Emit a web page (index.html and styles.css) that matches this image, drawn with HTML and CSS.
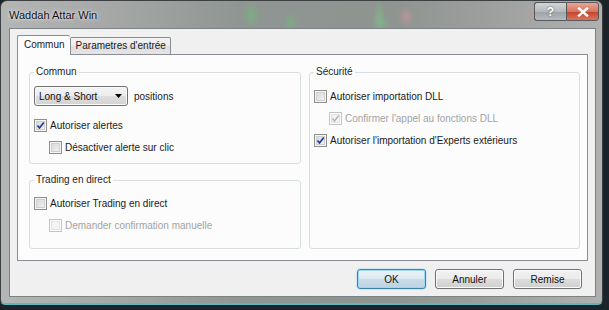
FILE: index.html
```html
<!DOCTYPE html>
<html lang="fr">
<head>
  <meta charset="UTF-8">
  <title>Waddah Attar Win</title>
  <link rel="stylesheet" href="styles.css">
</head>
<body>
  <div class="window">
    <div class="titlebar">
      <span class="title">Waddah Attar Win</span>
      <div class="caption">
        <span class="cap help">?</span>
        <span class="cap close">
          <svg width="12" height="10" viewBox="0 0 12 10"><path d="M2 1.5 L10 8.5 M10 1.5 L2 8.5" stroke="#fff" stroke-width="2.4" stroke-linecap="square"/></svg>
        </span>
      </div>
    </div>

    <div class="client">
      <div class="tabs">
        <span class="tab active">Commun</span>
        <span class="tab">Parametres d'entrée</span>
      </div>

      <div class="panel">
        <div class="col">
          <fieldset class="group commun">
            <legend>Commun</legend>
            <div class="combo-row">
              <span class="combo">Long &amp; Short
                <svg class="arrow" width="7" height="4" viewBox="0 0 7 4"><path d="M0 0 H7 L3.5 4 Z" fill="#000"/></svg>
              </span>
              <span>positions</span>
            </div>
            <div class="check on">
              <span class="box"><svg width="11" height="11" viewBox="0 0 11 11"><path d="M2.5 5.5 L4.5 8 L8.8 2.5" fill="none" stroke="#23399b" stroke-width="1.7"/></svg></span>
              Autoriser alertes
            </div>
            <div class="check sub">
              <span class="box"></span>
              Désactiver alerte sur clic
            </div>
          </fieldset>

          <fieldset class="group trading">
            <legend>Trading en direct</legend>
            <div class="check">
              <span class="box"></span>
              Autoriser Trading en direct
            </div>
            <div class="check sub off">
              <span class="box"></span>
              Demander confirmation manuelle
            </div>
          </fieldset>
        </div>

        <fieldset class="group secu">
          <legend>Sécurité</legend>
          <div class="check">
            <span class="box"></span>
            Autoriser importation DLL
          </div>
          <div class="check sub off">
            <span class="box"><svg width="11" height="11" viewBox="0 0 11 11"><path d="M2.5 5.5 L4.5 8 L8.8 2.5" fill="none" stroke="#b4b4b4" stroke-width="1.5"/></svg></span>
            Confirmer l'appel au fonctions DLL
          </div>
          <div class="check">
            <span class="box"><svg width="11" height="11" viewBox="0 0 11 11"><path d="M2.5 5.5 L4.5 8 L8.8 2.5" fill="none" stroke="#23399b" stroke-width="1.7"/></svg></span>
            Autoriser l'importation d'Experts extérieurs
          </div>
        </fieldset>
      </div>

      <div class="buttons">
        <button class="btn default">OK</button>
        <button class="btn">Annuler</button>
        <button class="btn">Remise</button>
      </div>
    </div>
  </div>
</body>
</html>
```

FILE: styles.css
```css
* {
  margin: 0;
  padding: 0;
  box-sizing: border-box;
}
body {
  width: 609px;
  height: 310px;
  overflow: hidden;
  background: #1b2428;
  font-family: "Liberation Sans", Arial, sans-serif;
  font-size: 10px;
  color: #1a1a1a;
}
.window {
  width: 603px;
  height: 305px;
  display: flex;
  flex-direction: column;
  padding: 0 6px 6px 8px;
  border: 1px solid #3c4043;
  border-bottom: 2px solid #62b4bd;
  border-radius: 7px 7px 5px 5px;
  background:
    radial-gradient(ellipse 10px 14px at 250px 14px, rgba(110, 190, 120, 0.55), transparent),
    radial-gradient(ellipse 8px 12px at 290px 22px, rgba(110, 190, 120, 0.5), transparent),
    radial-gradient(ellipse 10px 10px at 380px 22px, rgba(120, 200, 130, 0.45), transparent),
    radial-gradient(ellipse 6px 16px at 378px 14px, rgba(120, 200, 130, 0.45), transparent),
    radial-gradient(ellipse 8px 10px at 405px 16px, rgba(215, 150, 160, 0.55), transparent),
    radial-gradient(ellipse 8px 10px at 530px 14px, rgba(200, 150, 155, 0.35), transparent),
    linear-gradient(to right, #b4b6b5 0%, #a3a6a5 20%, #8f9592 40%, #8e9490 65%, #9c9e9d 80%, #b0b0b1 100%);
}
.titlebar {
  height: 28px;
  display: flex;
  justify-content: space-between;
}
.title {
  font-size: 11px;
  color: #111;
  padding-top: 8px;
  text-shadow: 0 0 4px #e8e8e8, 0 0 2px #f0f0f0;
}
.caption {
  display: flex;
  margin-top: 1px;
  margin-right: -3px;
  height: 19px;
}
.cap {
  display: flex;
  align-items: center;
  justify-content: center;
  height: 19px;
  border: 1px solid #55595c;
  color: #fff;
  font-weight: bold;
  font-size: 12px;
}
.help {
  width: 32px;
  border-right: none;
  border-radius: 3px 0 0 3px;
  background: linear-gradient(#d3d6d8, #b4b9bc 50%, #9ca2a6 51%, #b5babd);
  text-shadow: 0 0 2px #444;
}
.close {
  width: 33px;
  border-radius: 0 3px 3px 0;
  background: linear-gradient(#e9a696, #d8735d 50%, #c2412a 51%, #d9765c);
}
.client {
  flex: 1;
  background: #f0f0f0;
  border: 1px solid #7c8286;
  padding: 6px 7px 7px 7px;
  display: flex;
  flex-direction: column;
}
.tabs {
  height: 19px;
  display: flex;
  align-items: flex-end;
}
.tab {
  height: 17px;
  padding: 0 4px 0 5px;
  line-height: 15px;
  border: 1px solid #8a8d93;
  border-bottom: none;
  background: linear-gradient(#f3f3f3, #ebebeb 50%, #dedede 51%, #e5e5e5);
  border-radius: 2px 2px 0 0;
}
.tab.active {
  position: relative;
  z-index: 1;
  height: 20px;
  margin-bottom: -1px;
  padding: 0 5px 0 6px;
  line-height: 17px;
  background: #fcfcfc;
  border-right: none;
}
.panel {
  height: 207px;
  border: 1px solid #8a8d93;
  background: #fcfcfc;
  padding: 11px 10px 11px 11px;
  display: grid;
  grid-template-columns: 272px 271px;
  gap: 8px;
}
.col {
  display: flex;
  flex-direction: column;
  gap: 10px;
}
.group {
  min-width: 0;
  border: 1px solid #d8dde0;
  border-radius: 3px;
  padding: 0 4px;
}
.group legend {
  padding: 0 2px;
  line-height: 12px;
  color: #1e1e1e;
}
.commun {
  height: 98px;
  padding-top: 8px;
}
.trading {
  flex: 1;
  padding-top: 6px;
}
.secu {
  padding-top: 7px;
}
.combo-row {
  display: flex;
  align-items: center;
  gap: 6px;
  margin-bottom: 8px;
}
.combo {
  width: 94px;
  height: 20px;
  display: flex;
  align-items: center;
  justify-content: space-between;
  padding: 0 5px 0 4px;
  border: 1px solid #707070;
  border-radius: 3px;
  background: linear-gradient(#f4f4f4, #ececec 50%, #dedede 51%, #d2d2d2);
  box-shadow: inset 0 0 0 1px #fafafa;
  color: #111;
}
.check {
  height: 22px;
  display: flex;
  align-items: center;
  gap: 3px;
}
.check.sub {
  padding-left: 15px;
}
.box {
  width: 13px;
  height: 13px;
  border: 1px solid #8e8f8f;
  background: linear-gradient(135deg, #d4d4d4, #f6f6f6);
  box-shadow: inset 0 0 0 1px #f4f4f4, inset 0 0 0 2px #cfcfcf;
  display: flex;
  align-items: center;
  justify-content: center;
}
.check.off {
  color: #a3a3a3;
}
.check.off .box {
  border-color: #c4c4c4;
  background: #f4f4f4;
  box-shadow: inset 0 0 0 1px #fbfbfb, inset 0 0 0 2px #e4e4e4;
}
.buttons {
  margin-top: 8px;
  display: flex;
  justify-content: flex-end;
  gap: 9px;
  padding-right: 6px;
}
.btn {
  width: 69px;
  height: 20px;
  font-family: "Liberation Sans", Arial, sans-serif;
  font-size: 10px;
  color: #111;
  border: 1px solid #707070;
  border-radius: 3px;
  background: linear-gradient(#f2f2f2, #ebebeb 50%, #dddddd 51%, #cfcfcf);
  box-shadow: inset 0 0 0 1px #fbfbfb;
}
.btn.default {
  border-color: #3c7fb1;
  background: linear-gradient(#e9f1f6, #dce9f1 50%, #c9dce8 51%, #bcd3e1);
  box-shadow: inset 0 0 0 1px #9fd6f3, 0 0 2px #8ccbea;
}
```
